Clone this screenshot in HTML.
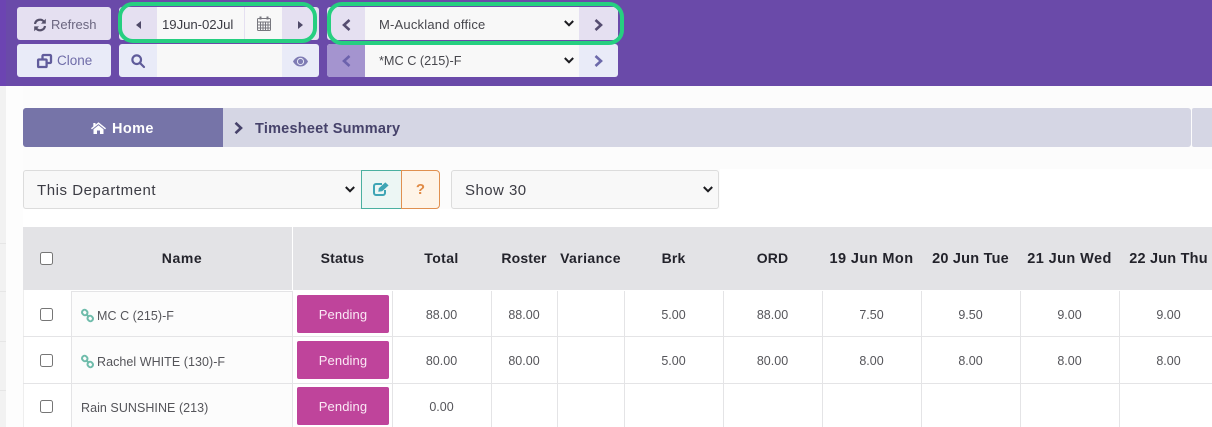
<!DOCTYPE html>
<html><head><meta charset="utf-8"><title>Timesheet Summary</title>
<style>
html,body{margin:0;padding:0;width:1212px;height:427px;overflow:hidden;background:#fff;font-family:"Liberation Sans",sans-serif;}
.a{position:absolute;box-sizing:border-box;}
.t{position:absolute;white-space:nowrap;text-align:center;line-height:20px;height:20px;}
.h{font-size:14px;font-weight:bold;color:#23232b;top:248px;letter-spacing:.15px;}
.d{font-size:14.500px;letter-spacing:.42px;top:249px;}
.c{font-size:12.500px;color:#55555a;}
.n{letter-spacing:.12px;}
.v{position:absolute;width:1px;background:#e4e4e6;top:291px;height:136px;}
.r{position:absolute;left:23px;right:0;height:1px;background:#e4e4e6;}
.p{position:absolute;left:297px;width:92px;height:38px;background:#bf449b;border-radius:2px;color:#fbe9f5;font-size:13px;line-height:39px;text-align:center;letter-spacing:.1px;}
.cb{position:absolute;left:40px;width:13px;height:13px;box-sizing:border-box;border:1px solid #767676;border-radius:2.500px;background:#fff;}
svg{position:absolute;display:block;overflow:visible;}
</style></head><body>
<!-- header -->
<div class="a" style="left:0;top:0;width:1212px;height:86px;background:#6a4aa9"></div>
<div class="a" style="left:0;top:0;width:6px;height:86px;background:#6c44b2"></div>
<!-- page background -->
<div class="a" style="left:0;top:86px;width:6px;height:341px;background:#f2f2f2"></div>
<div class="a" style="left:6px;top:86px;width:17px;height:341px;background:#fdfdfd"></div>
<div class="a" style="left:23px;top:86px;width:1189px;height:83px;background:#fcfcfc"></div>
<div class="a" style="left:23px;top:169px;width:697px;height:40px;background:#fcfcfc"></div>
<div class="a" style="left:0;top:243px;width:6px;height:1px;background:#e6e6e6"></div>
<div class="a" style="left:0;top:291px;width:6px;height:1px;background:#e6e6e6"></div>
<div class="a" style="left:0;top:341px;width:6px;height:1px;background:#e6e6e6"></div>
<div class="a" style="left:0;top:390px;width:6px;height:1px;background:#e6e6e6"></div>

<!-- Refresh / Clone -->
<div class="a" style="left:17px;top:7px;width:94px;height:33px;background:#e5e0f1;border-radius:3px"></div>
<svg style="left:33px;top:18px" width="14" height="14" viewBox="0 0 14 14" fill="none" stroke="#55506a" stroke-width="2.200"><path d="M2 6 A5 5 0 0 1 11 3.800"/><path d="M12 8 A5 5 0 0 1 3 10.200"/><path d="M12.800 .8V5.600H8z" fill="#55506a" stroke="none"/><path d="M1.200 13.200V8.400H6z" fill="#55506a" stroke="none"/></svg>
<div class="t" style="left:51px;top:15px;font-size:13px;color:#6b6680">Refresh</div>
<div class="a" style="left:17px;top:44px;width:94px;height:33px;background:#e9ebf8;border-radius:3px"></div>
<svg style="left:37px;top:54px" width="15" height="14" viewBox="0 0 15 14" fill="none" stroke="#615c9c" stroke-width="2.300"><rect x="1.100" y="5.500" width="8.500" height="7.500" rx=".8" fill="#e9ebf8"/><path d="M5.500 5V2a1 1 0 0 1 1-1h6.500a1 1 0 0 1 1 1v6a1 1 0 0 1-1 1h-3"/></svg>
<div class="t" style="left:57px;top:51px;font-size:13.500px;color:#6f6ca8">Clone</div>

<!-- date group -->
<div class="a" style="left:119px;top:7px;width:200px;height:33px;background:#e5e0f1;border-radius:3px"></div>
<div class="a" style="left:157px;top:7px;width:87px;height:33px;background:#f8f8f8"></div>
<div class="a" style="left:245px;top:7px;width:37px;height:33px;background:#f8f8f8"></div>
<svg style="left:136px;top:21px" width="5" height="8" viewBox="0 0 5 8"><path d="M5 0V8L0 4z" fill="#4f4a68"/></svg>
<div class="t" style="left:162px;top:15px;font-size:13.200px;color:#3c3c44;letter-spacing:-.05px">19Jun-02Jul</div>
<svg style="left:257px;top:16px" width="14" height="15" viewBox="0 0 14 15" fill="none" stroke="#77777e" stroke-width="1"><rect x=".5" y="2.500" width="13" height="12" rx="1"/><path d="M.5 6h13M.5 9h13M.5 12h13M3.500 6v8.500M6 6v8.500M8.500 6v8.500M11 6v8.500"/><path d="M3.500 .5v3M10.500 .5v3" stroke-width="2"/></svg>
<svg style="left:298px;top:21px" width="5" height="8" viewBox="0 0 5 8"><path d="M0 0V8L5 4z" fill="#4f4a68"/></svg>

<div class="a" style="left:119px;top:44px;width:200px;height:33px;background:#e9ebf8;border-radius:3px"></div>
<div class="a" style="left:157px;top:44px;width:125px;height:33px;background:#f8f8f8"></div>
<svg style="left:131px;top:54px" width="14" height="14" viewBox="0 0 14 14" fill="none" stroke="#5f5b9a" stroke-width="2.200"><circle cx="5.700" cy="5.700" r="4.300"/><path d="M9 9l4 4" stroke-linecap="round"/></svg>
<svg style="left:293px;top:56px" width="15" height="11" viewBox="0 0 15 11"><path d="M0 5.500C2 2 4.500 .5 7.500 .5S13 2 15 5.500C13 9 10.500 10.500 7.500 10.500S2 9 0 5.500z" fill="#7f7cb4"/><circle cx="7.500" cy="5.500" r="3.600" fill="#e9ebf8"/><circle cx="7.500" cy="5.500" r="2.600" fill="#7f7cb4"/></svg>

<!-- location group -->
<div class="a" style="left:327px;top:7px;width:291px;height:33px;background:#e5e0f1;border-radius:3px"></div>
<div class="a" style="left:365px;top:7px;width:214px;height:33px;background:#f8f8f8"></div>
<svg style="left:342px;top:19px" width="9" height="12" viewBox="0 0 9 12" fill="none" stroke="#554d70" stroke-width="2.600"><path d="M7.500 1L2 6l5.500 5"/></svg>
<div class="t" style="left:379px;top:15px;font-size:13px;color:#47474d;letter-spacing:.2px">M-Auckland office</div>
<svg style="left:564px;top:20px" width="10" height="7" viewBox="0 0 10 7" fill="none" stroke="#1c1c20" stroke-width="2"><path d="M.8 1L5 5.200 9.200 1"/></svg>
<svg style="left:594px;top:19px" width="9" height="12" viewBox="0 0 9 12" fill="none" stroke="#554d70" stroke-width="2.600"><path d="M1.500 1L7 6l-5.500 5"/></svg>

<div class="a" style="left:327px;top:44px;width:291px;height:33px;background:#e9ebf8;border-radius:3px"></div>
<div class="a" style="left:327px;top:44px;width:38px;height:33px;background:#a494cf;border-radius:3px 0 0 3px"></div>
<div class="a" style="left:365px;top:44px;width:214px;height:33px;background:#f8f8f8"></div>
<svg style="left:342px;top:55px" width="9" height="12" viewBox="0 0 9 12" fill="none" stroke="#6c62ac" stroke-width="2.600"><path d="M7.500 1L2 6l5.500 5"/></svg>
<div class="t" style="left:379px;top:51px;font-size:12.700px;color:#47474d">*MC C (215)-F</div>
<svg style="left:564px;top:57px" width="10" height="7" viewBox="0 0 10 7" fill="none" stroke="#1c1c20" stroke-width="2"><path d="M.8 1L5 5.200 9.200 1"/></svg>
<svg style="left:594px;top:55px" width="9" height="12" viewBox="0 0 9 12" fill="none" stroke="#6c69aa" stroke-width="2.600"><path d="M1.500 1L7 6l-5.500 5"/></svg>

<!-- green highlights -->
<div class="a" style="left:118px;top:2px;width:199px;height:41px;border:4px solid #26cf80;border-radius:15px"></div>
<div class="a" style="left:327px;top:2px;width:297px;height:43px;border:4px solid #26cf80;border-radius:15px"></div>

<!-- breadcrumb -->
<div class="a" style="left:23px;top:108px;width:1168px;height:39px;background:#d5d6e4;border-radius:3px"></div>
<div class="a" style="left:1192px;top:108px;width:20px;height:39px;background:#d5d6e4;border-radius:2px 0 0 2px"></div>
<div class="a" style="left:23px;top:108px;width:200px;height:39px;background:#7674a8;border-radius:3px 0 0 3px"></div>
<svg style="left:91px;top:122px" width="15" height="12" viewBox="0 0 15 12"><path d="M7.500 .2L15 6.300l-.9 1.100L7.500 2.100.9 7.400 0 6.300l2.300-1.900V1h2.200v1.600z" fill="#fff"/><path d="M2.500 7.300L7.500 3.300l5 4V12H9V8.500H6V12H2.500z" fill="#fff"/></svg>
<div class="t" style="left:112px;top:119px;font-size:14.500px;font-weight:bold;color:#fff;letter-spacing:.4px">Home</div>
<svg style="left:234px;top:122px" width="10" height="12" viewBox="0 0 10 12" fill="none" stroke="#46426a" stroke-width="2.600"><path d="M1.500 .8L7 6l-5.500 5.200"/></svg>
<div class="t" style="left:255px;top:119px;font-size:14.500px;font-weight:bold;color:#46426a;letter-spacing:.22px">Timesheet Summary</div>

<!-- filters -->
<div class="a" style="left:23px;top:170px;width:339px;height:39px;background:#f8f8f8;border:1px solid #dcdcdc;border-radius:3px 0 0 3px"></div>
<div class="t" style="left:37px;top:181px;font-size:15px;color:#3c3c44;letter-spacing:.55px">This Department</div>
<svg style="left:345px;top:186px" width="10" height="7" viewBox="0 0 10 7" fill="none" stroke="#1c1c20" stroke-width="2"><path d="M.8 1L5 5.200 9.200 1"/></svg>
<div class="a" style="left:361px;top:170px;width:41px;height:39px;background:#ecf6f4;border:1px solid #4bb0a0"></div>
<svg style="left:373px;top:182px" width="16" height="14" viewBox="0 0 16 14" fill="none"><path d="M12 8v3a2 2 0 0 1-2 2H3a2 2 0 0 1-2-2V4a2 2 0 0 1 2-2h6" stroke="#3fa5b5" stroke-width="2"/><path d="M5.300 9.700l.5-3.400L12.300.4l3.300 3-6.400 5.800z" fill="#3fa5b5"/></svg>
<div class="a" style="left:401px;top:170px;width:39px;height:39px;background:#fef4e8;border:1px solid #e09050;border-radius:0 4px 4px 0"></div>
<div class="t" style="left:401px;top:180px;width:39px;font-size:15px;font-weight:bold;color:#e08a45">?</div>
<div class="a" style="left:451px;top:170px;width:268px;height:39px;background:#f8f8f8;border:1px solid #dcdcdc;border-radius:3px"></div>
<div class="t" style="left:465px;top:181px;font-size:15px;color:#3c3c44;letter-spacing:.45px">Show 30</div>
<svg style="left:703px;top:186px" width="10" height="7" viewBox="0 0 10 7" fill="none" stroke="#1c1c20" stroke-width="2"><path d="M.8 1L5 5.200 9.200 1"/></svg>

<!-- table -->
<div class="a" style="left:23px;top:227px;width:1189px;height:63px;background:#e3e3e6"></div>
<div class="a" style="left:292px;top:227px;width:1px;height:63px;background:#fff"></div>
<div class="a" style="left:71px;top:291px;width:221px;height:136px;background:#fcfcfc"></div>
<div class="a" style="left:71px;top:291px;width:221px;height:1px;background:#e4e4e6"></div>
<div class="a" style="left:23px;top:290px;width:1px;height:137px;background:#eeeeee"></div>
<div class="r" style="top:336px"></div>
<div class="r" style="top:383px"></div>
<div class="v" style="left:71px"></div>
<div class="v" style="left:292px"></div>
<div class="v" style="left:392px"></div>
<div class="v" style="left:491px"></div>
<div class="v" style="left:557px"></div>
<div class="v" style="left:624px"></div>
<div class="v" style="left:723px"></div>
<div class="v" style="left:822px"></div>
<div class="v" style="left:921px"></div>
<div class="v" style="left:1020px"></div>
<div class="v" style="left:1119px"></div>

<div class="cb" style="top:252px"></div>
<div class="cb" style="top:308px"></div>
<div class="cb" style="top:354px"></div>
<div class="cb" style="top:400px"></div>

<div class="t h" style="left:72px;width:220px;letter-spacing:.6px">Name</div>
<div class="t h" style="left:293px;width:99px">Status</div>
<div class="t h" style="left:392px;width:99px;letter-spacing:.4px">Total</div>
<div class="t h" style="left:491px;width:66px">Roster</div>
<div class="t h" style="left:557px;width:67px;letter-spacing:.4px">Variance</div>
<div class="t h" style="left:624px;width:99px">Brk</div>
<div class="t h" style="left:723px;width:99px">ORD</div>
<div class="t h d" style="left:822px;width:99px">19 Jun Mon</div>
<div class="t h d" style="left:921px;width:99px;letter-spacing:.22px">20 Jun Tue</div>
<div class="t h d" style="left:1020px;width:99px">21 Jun Wed</div>
<div class="t h d" style="left:1119px;width:99px;letter-spacing:.2px">22 Jun Thu</div>

<svg style="left:81px;top:309px" width="13" height="13" viewBox="0 0 13 13" fill="none" stroke="#6fbcab" stroke-width="2"><rect x="1" y="1" width="5.500" height="5" rx="2.300" transform="rotate(45 3.750 3.500)"/><rect x="6.500" y="7" width="5.500" height="5" rx="2.300" transform="rotate(45 9.250 9.500)"/><path d="M5 5l3 3"/></svg>
<div class="t c n" style="left:97px;top:306px;letter-spacing:.05px">MC C (215)-F</div>
<svg style="left:81px;top:355px" width="13" height="13" viewBox="0 0 13 13" fill="none" stroke="#6fbcab" stroke-width="2"><rect x="1" y="1" width="5.500" height="5" rx="2.300" transform="rotate(45 3.750 3.500)"/><rect x="6.500" y="7" width="5.500" height="5" rx="2.300" transform="rotate(45 9.250 9.500)"/><path d="M5 5l3 3"/></svg>
<div class="t c n" style="left:97px;top:352px;letter-spacing:.05px">Rachel WHITE (130)-F</div>
<div class="t c" style="left:81px;top:398px;letter-spacing:.05px">Rain SUNSHINE (213)</div>

<div class="p" style="top:295px">Pending</div>
<div class="p" style="top:341px">Pending</div>
<div class="p" style="top:387px">Pending</div>

<div class="t c" style="left:392px;width:99px;top:305px">88.00</div>
<div class="t c" style="left:491px;width:66px;top:305px">88.00</div>
<div class="t c" style="left:624px;width:99px;top:305px">5.00</div>
<div class="t c" style="left:723px;width:99px;top:305px">88.00</div>
<div class="t c" style="left:822px;width:99px;top:305px">7.50</div>
<div class="t c" style="left:921px;width:99px;top:305px">9.50</div>
<div class="t c" style="left:1020px;width:99px;top:305px">9.00</div>
<div class="t c" style="left:1119px;width:99px;top:305px">9.00</div>

<div class="t c" style="left:392px;width:99px;top:351px">80.00</div>
<div class="t c" style="left:491px;width:66px;top:351px">80.00</div>
<div class="t c" style="left:624px;width:99px;top:351px">5.00</div>
<div class="t c" style="left:723px;width:99px;top:351px">80.00</div>
<div class="t c" style="left:822px;width:99px;top:351px">8.00</div>
<div class="t c" style="left:921px;width:99px;top:351px">8.00</div>
<div class="t c" style="left:1020px;width:99px;top:351px">8.00</div>
<div class="t c" style="left:1119px;width:99px;top:351px">8.00</div>

<div class="t c" style="left:392px;width:99px;top:397px">0.00</div>
</body></html>
